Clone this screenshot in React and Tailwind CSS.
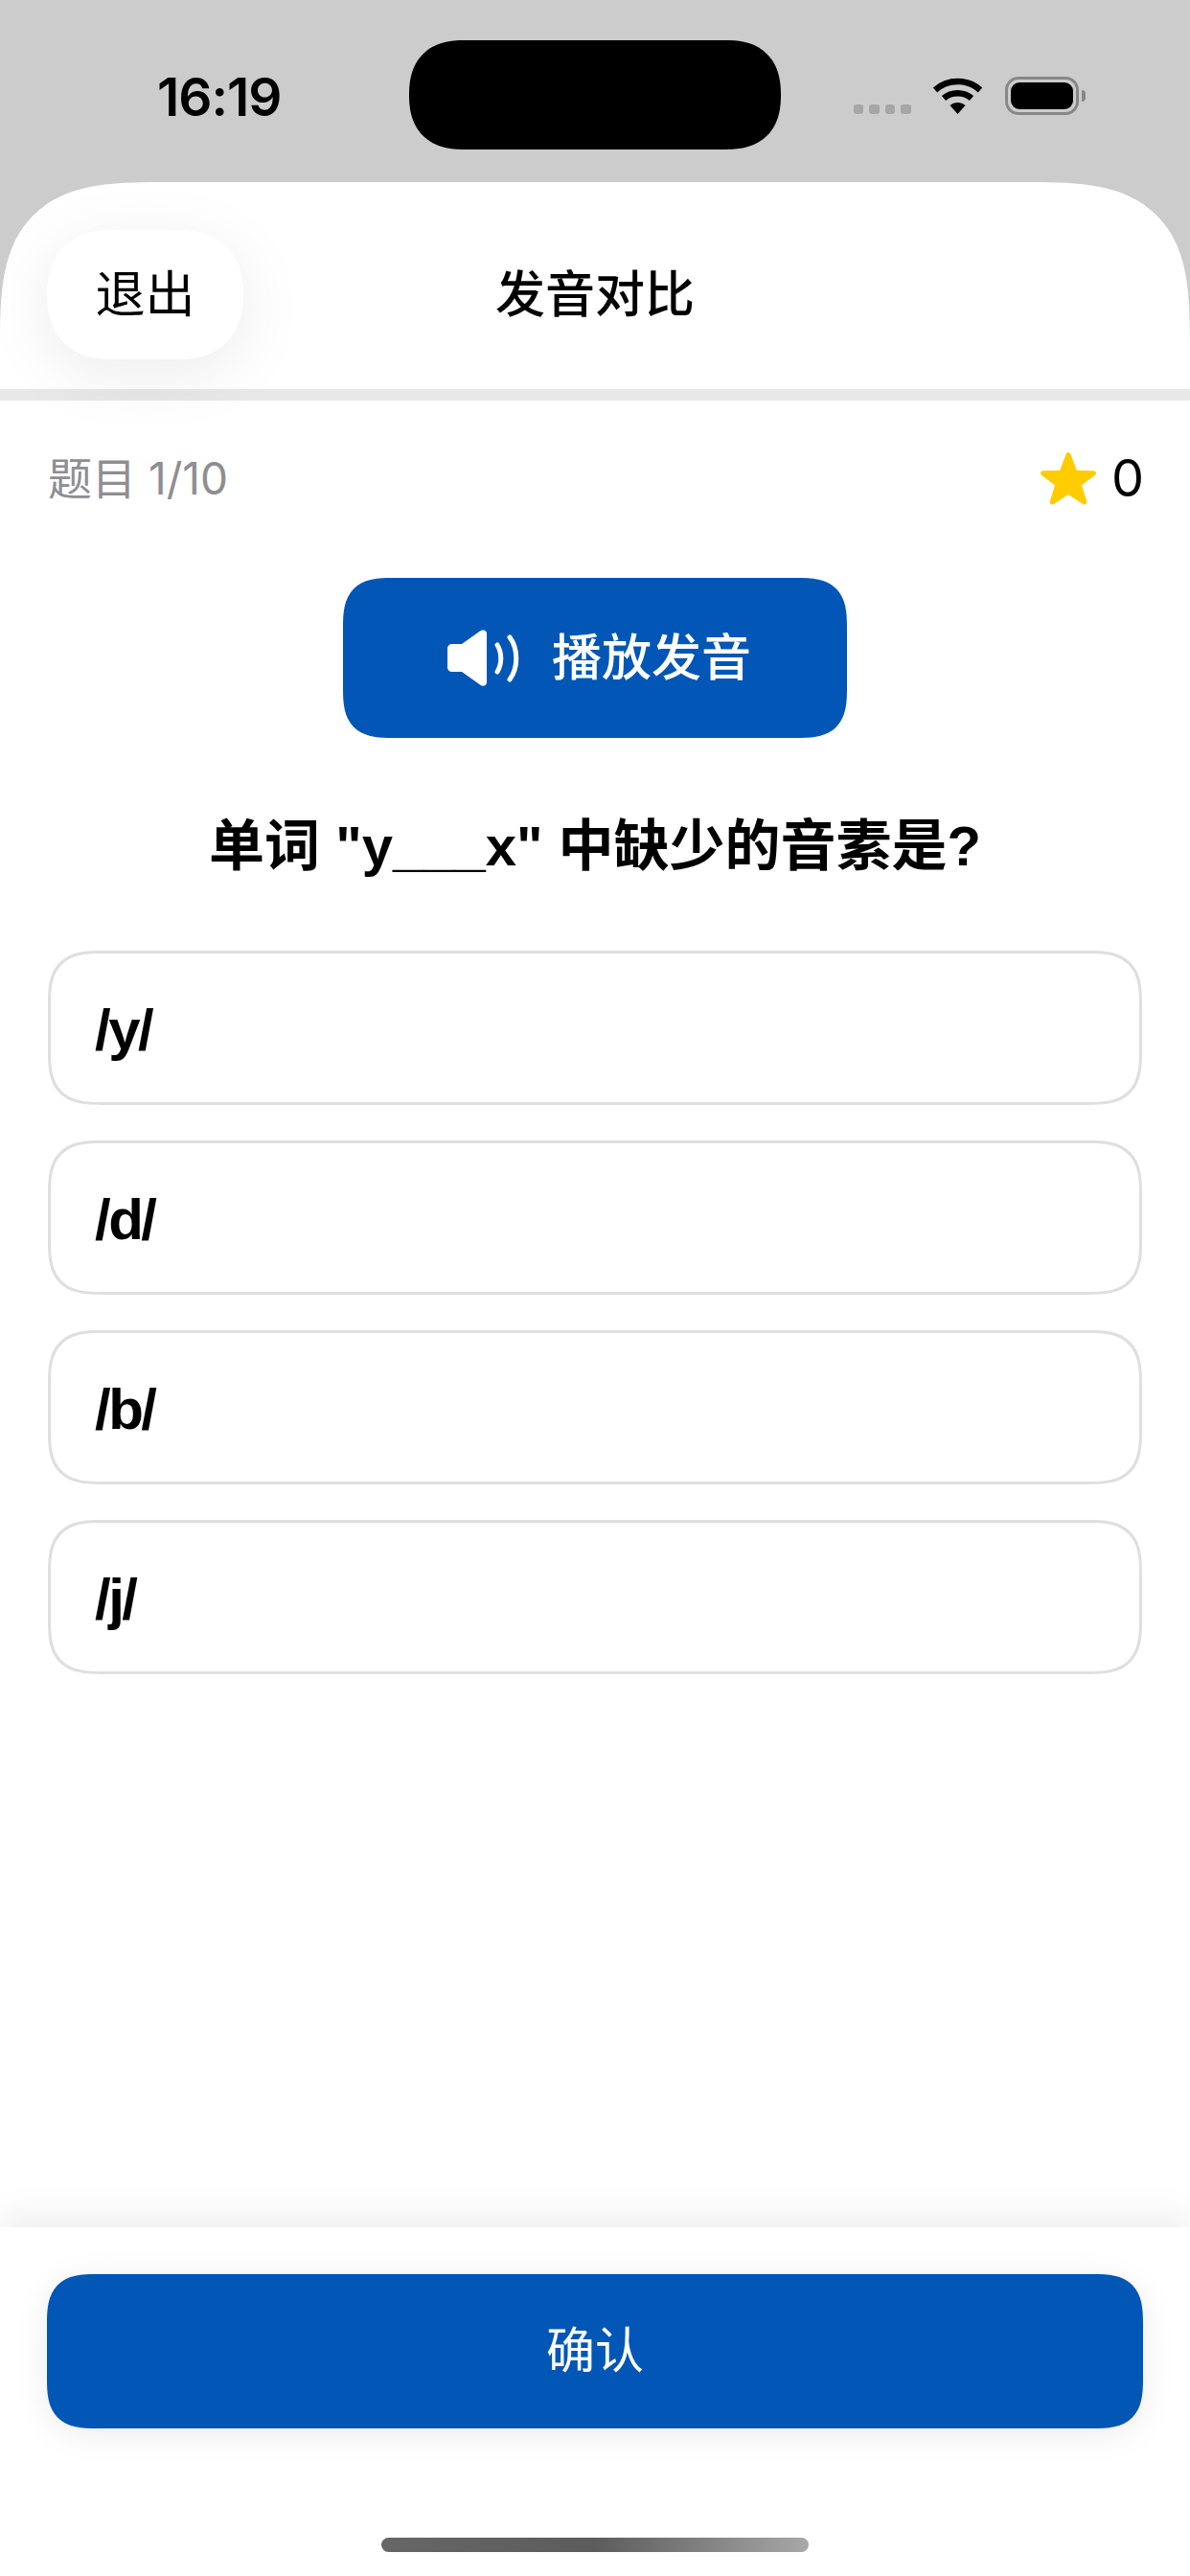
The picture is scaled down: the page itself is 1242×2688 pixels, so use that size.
import React from "react";

const options = ["/y/", "/d/", "/b/", "/j/"];

function StatusBar() {
  return (
    <div className="h-[190px] shrink-0 relative flex items-start">
      <span className="absolute left-[164px] top-[69px] text-[55px] leading-[64px] font-semibold text-black tracking-[-1px]">16:19</span>
      <div className="absolute left-[427px] top-[42px] w-[388px] h-[114px] rounded-[57px] [corner-shape:superellipse(1.25)] bg-black" />
      <div className="absolute left-[891px] top-[109px] flex gap-[6px]">
        <div className="w-[10px] h-[10px] rounded-[3px] bg-[#a6a6a6]" />
        <div className="w-[11px] h-[10px] rounded-[3px] bg-[#a6a6a6]" />
        <div className="w-[10px] h-[10px] rounded-[3px] bg-[#a6a6a6]" />
        <div className="w-[11px] h-[10px] rounded-[3px] bg-[#a6a6a6]" />
      </div>
      <svg className="absolute left-[973px] top-[81px]" width="53" height="38" viewBox="0 0 53 38">
        <path d="M3 13 C16 1 37 1 50 13" fill="none" stroke="#000" strokeWidth="6.5" strokeLinecap="butt" />
        <path d="M12 21.5 C20 14.5 33 14.5 41 21.5" fill="none" stroke="#000" strokeWidth="6.5" strokeLinecap="butt" />
        <path d="M18.5 29 C23 25 30 25 34.5 29 L26.5 38 Z" fill="#000" />
      </svg>
      <div className="absolute left-[1049px] top-[80px] w-[77px] h-[40px] rounded-[14px] border-[3px] border-[#878787] p-[3px]">
        <div className="w-full h-full rounded-[9px] bg-black" />
      </div>
      <div className="absolute left-[1129px] top-[94px] w-[4px] h-[12px] rounded-r-[4px] bg-[#878787]" />
    </div>
  );
}

function Speaker() {
  return (
    <svg width="80" height="60" viewBox="0 0 80 60" fill="none">
      <path d="M6 15 H16 L35 1.5 C38 -0.5 42 0.5 42 4 V55 C42 58.5 38 60 35 57.5 L16 44 H6 C3 44 1 42 1 39 V20 C1 17 3 15 6 15 Z" fill="#fff" />
      <path d="M53 16 C58 24 58 36 53 44" stroke="#fff" strokeWidth="5" strokeLinecap="round" />
      <path d="M66 8 C75 20 75 40 66 52" stroke="#fff" strokeWidth="5" strokeLinecap="round" />
    </svg>
  );
}

export default function App() {
  return (
    <div className="w-[1242px] h-[2688px] bg-[#cccccc] flex flex-col overflow-hidden font-['Inter','Noto_Sans_CJK_SC',sans-serif] text-black">
      <StatusBar />
      <div className="flex-1 flex flex-col bg-white rounded-t-[170px] [corner-shape:superellipse(1.6)] overflow-hidden">
        <div className="h-[216px] shrink-0 relative flex items-center justify-center pt-[20px]">
          <button className="absolute left-[49px] top-[50px] w-[205px] h-[135px] rounded-[68px] [corner-shape:superellipse(1.2)] bg-white text-[52px] leading-[135px] shadow-[0_14px_70px_rgba(0,0,0,0.08)] z-10">退出</button>
          <h1 className="text-[52px] leading-[70px] font-medium">发音对比</h1>
        </div>
        <div className="h-[12px] shrink-0 bg-[#e8e8e8]" />

        <div className="flex-1 flex flex-col px-[50px]">
          <div className="flex items-center justify-between h-[162px] shrink-0">
            <span className="text-[46px] text-[#8e8e93]">题目 1/10</span>
            <div className="flex items-center gap-[15px] -mr-[2px]">
              <svg width="60" height="58" viewBox="0 0 58 56">
                <path d="M29 2 C30 2 31 3 31.5 4 L37.5 20 L54 20.5 C57 20.5 58 23 56 25 L42.5 35 L47.5 51 C48 54 46 55.5 43.5 54 L29 44.5 L14.5 54 C12 55.5 10 54 10.5 51 L15.5 35 L2 25 C0 23 1 20.5 4 20.5 L20.5 20 L26.5 4 C27 3 28 2 29 2 Z" fill="#ffcc00" />
              </svg>
              <span className="text-[54px] leading-[60px]">0</span>
            </div>
          </div>

          <button className="self-center mt-[23px] w-[526px] h-[167px] rounded-[52px] [corner-shape:superellipse(1.5)] bg-[#0256b6] text-white flex items-center justify-center gap-[30px] pl-[8px]">
            <Speaker />
            <span className="text-[52px] leading-[70px] font-medium">播放发音</span>
          </button>

          <h2 className="mt-[73px] text-center text-[58px] leading-[80px] font-semibold font-['Liberation_Sans','Noto_Sans_CJK_SC',sans-serif]">单词 "y___x" 中缺少的音素是?</h2>

          <div className="mt-[69px] flex flex-col gap-[37px]">
            {options.map((o) => (
              <div key={o} className="h-[161px] rounded-[56px] [corner-shape:superellipse(1.5)] border-[3px] border-[#dfdfe1] flex items-center px-[46px] pt-[4px] text-[60px] font-semibold font-['Liberation_Sans',sans-serif] tracking-[-2.5px]">
                {o}
              </div>
            ))}
          </div>
        </div>

        <div className="h-[364px] shrink-0 relative bg-white px-[49px] pt-[49px] shadow-[0_-12px_36px_rgba(0,0,0,0.07)]">
          <button className="w-full h-[161px] rounded-[52px] [corner-shape:superellipse(1.5)] bg-[#0256b6] text-white text-[51px] shadow-[0_6px_36px_rgba(0,0,0,0.08)]">确认</button>
          <div className="absolute left-[398px] top-[324px] w-[446px] h-[15px] rounded-full bg-gradient-to-r from-[#666666] via-[#5c5c5c] to-[#a8a8a8]" />
        </div>
      </div>
    </div>
  );
}
